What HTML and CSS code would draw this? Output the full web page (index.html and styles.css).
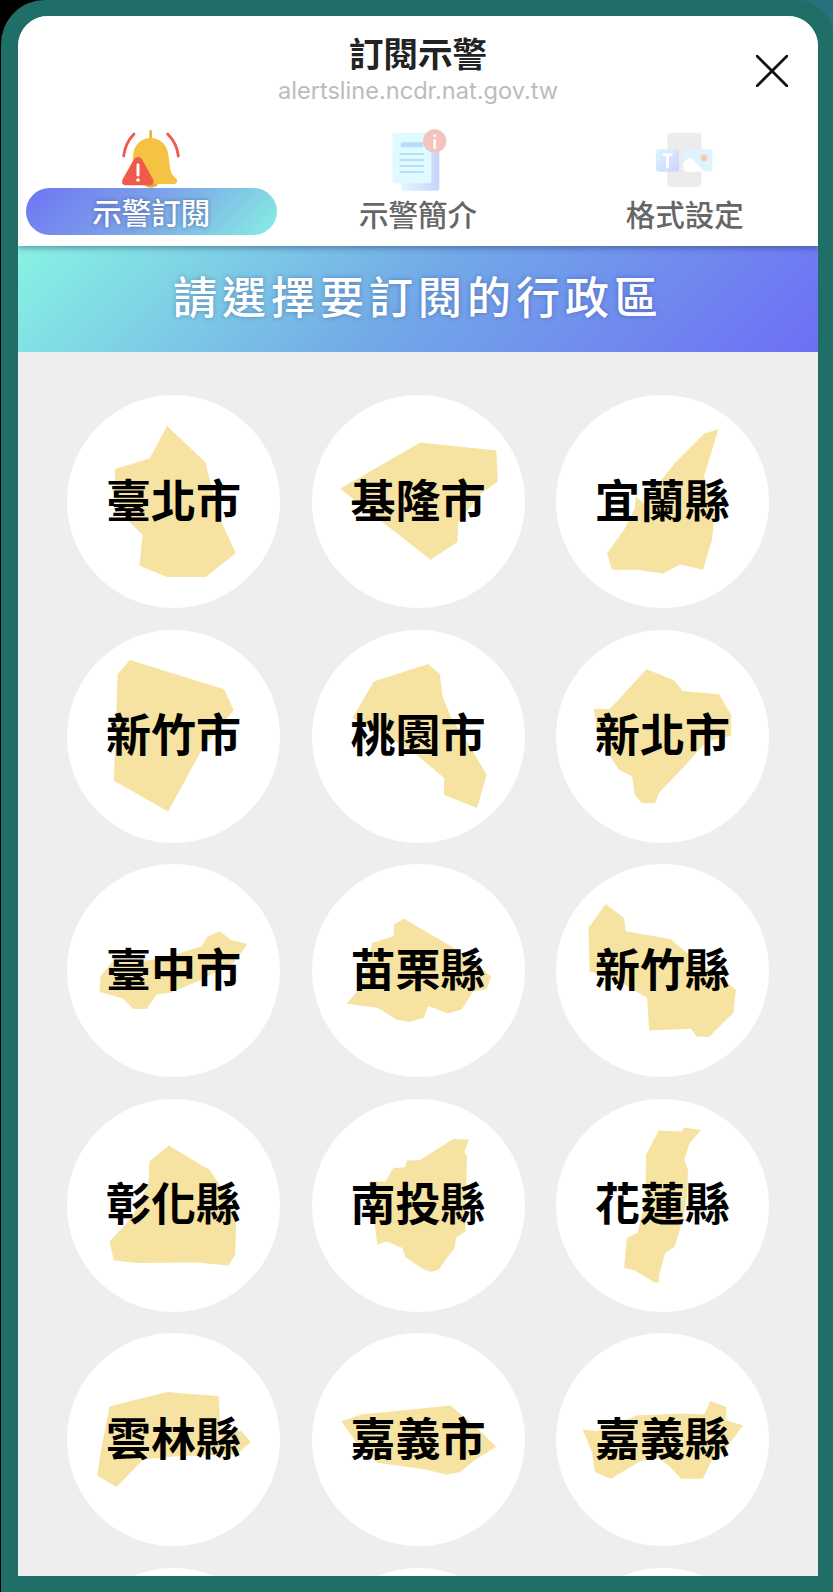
FILE: index.html
```html
<!DOCTYPE html>
<html lang="zh-Hant">
<head>
<meta charset="utf-8">
<title>訂閱示警</title>
<link rel="stylesheet" href="styles.css">
</head>
<body>
<div class="frame">
  <main class="panel">
    <header class="head">
      <div class="titlebar">
        <div class="title">訂閱示警</div>
        <div class="url">alertsline.ncdr.nat.gov.tw</div>
        <svg class="close" viewBox="0 0 32 32"><path d="M1 1L31 31M31 1L1 31"/></svg>
      </div>
      <nav class="tabs">
        <div class="tab active">
          <svg class="tabicon" viewBox="64 24 180 180">
            <path class="arc" d="M103 42Q76 70 72 108M204 42Q232 70 236 108"/>
            <path class="knob" d="M153 34V60"/>
            <path class="bell-clap" d="M132 190H175Q172 203 153 203Q136 203 132 190Z"/>
            <path class="bell" d="M153 54C122 54 101 78 100 110L98 160L76 192H224Q234 192 232 178Q216 166 212 150L207 110C205 78 184 54 153 54Z"/>
            <path class="warn" d="M115 111Q122 111 127 118L160 178Q166 196 150 196H80Q62 196 69 178L103 118Q108 111 115 111Z"/>
            <path class="warn-mark" d="M115 134V165"/>
            <circle class="warn-dot" cx="115" cy="180" r="5.5"/>
          </svg>
          <div class="label">示警訂閱</div>
        </div>
        <div class="tab">
          <svg class="tabicon" viewBox="54 24 180 180">
            <defs>
              <linearGradient id="docback" x1="0" y1="0" x2="1" y2="0"><stop offset="0" stop-color="#e2f7ff"/><stop offset="1" stop-color="#c9d3fb"/></linearGradient>
              <linearGradient id="tbox" x1="0" y1="0" x2="1" y2="1"><stop offset="0" stop-color="#d9f6ff"/><stop offset="1" stop-color="#cfd2fb"/></linearGradient>
            </defs>
            <rect class="doc-back" x="93" y="60" width="115" height="152" rx="8"/>
            <rect class="doc-front" x="67" y="38" width="117" height="152" rx="8"/>
            <rect class="doc-line" x="92" y="67" width="68" height="15" rx="4"/>
            <rect class="doc-line" x="88" y="99" width="74" height="6" rx="3"/>
            <rect class="doc-line" x="88" y="117" width="74" height="6" rx="3"/>
            <rect class="doc-line" x="88" y="135" width="74" height="6" rx="3"/>
            <rect class="doc-line" x="88" y="153" width="74" height="6" rx="3"/>
            <circle class="info" cx="194" cy="63" r="35"/>
            <circle class="info-mark" cx="194" cy="47" r="4"/>
            <rect class="info-mark" x="190" y="57" width="8" height="29" rx="3"/>
          </svg>
          <div class="label">示警簡介</div>
        </div>
        <div class="tab">
          <svg class="tabicon" viewBox="45 24 180 180">
            <rect class="phone" x="82" y="38" width="102" height="163" rx="11"/>
            <rect class="tbox" x="48" y="88" width="69" height="67" rx="9"/>
            <path class="tmark" d="M68 100H98V108H87V145H78V108H68Z"/>
            <rect class="picbox" x="130" y="88" width="87" height="67" rx="10"/>
            <path class="mount" d="M130 130Q143 112 155 115Q170 128 193 155H140Q130 155 130 145Z"/>
            <circle class="sun" cx="192" cy="114" r="10"/>
          </svg>
          <div class="label">格式設定</div>
        </div>
      </nav>
    </header>
    <div class="banner">請選擇要訂閱的行政區</div>
    <section class="grid">
      <div class="city"><svg viewBox="127 45 400 640" preserveAspectRatio="none"><polygon points="315,138 387,247 395,300 415,420 444,520 388,592 315,592 263,558 269,465 240,420 217,350 217,267 282,236"/></svg><span>臺北市</span></div>
      <div class="city"><svg viewBox="587 45 400 640" preserveAspectRatio="none"><polygon points="790,188 933,212 936,305 905,340 862,425 860,487 810,540 730,440 640,327"/></svg><span>基隆市</span></div>
      <div class="city"><svg viewBox="1047 45 400 640" preserveAspectRatio="none"><polygon points="1352,148 1326,160 1270,250 1240,310 1215,375 1197,350 1195,385 1175,450 1143,520 1152,570 1200,570 1248,581 1280,554 1323,570 1340,480 1345,400 1325,290"/></svg><span>宜蘭縣</span></div>
      <div class="city"><svg viewBox="127 750 400 640" preserveAspectRatio="none"><polygon points="245,840 422,928 440,990 380,1110 317,1295 215,1203 222,883"/></svg><span>新竹市</span></div>
      <div class="city"><svg viewBox="587 750 400 640" preserveAspectRatio="none"><polygon points="805,852 827,882 832,950 850,1020 880,1090 915,1185 897,1285 835,1245 835,1195 780,1120 720,1060 663,1015 703,905"/></svg><span>桃園市</span></div>
      <div class="city"><svg viewBox="1047 750 400 640" preserveAspectRatio="none"><polygon points="1217,868 1268,900 1285,933 1353,943 1376,1005 1376,1068 1330,1085 1285,1165 1240,1240 1233,1270 1208,1270 1195,1245 1190,1190 1165,1170 1145,1120 1125,1060 1118,987 1148,987"/></svg><span>新北市</span></div>
      <div class="city"><svg viewBox="127 43 400 640" preserveAspectRatio="none"><polygon points="414,245 436,272 466,283 440,340 380,390 322,430 295,435 277,479 252,479 232,447 188,427 190,380 210,340 300,330 380,290 390,262"/></svg><span>臺中市</span></div>
      <div class="city"><svg viewBox="587 43 400 640" preserveAspectRatio="none"><polygon points="759,207 848,290 900,350 923,380 915,420 890,425 868,480 842,492 805,470 797,505 770,518 745,510 710,475 652,463 680,410 700,280 740,260 741,225"/></svg><span>苗栗縣</span></div>
      <div class="city"><svg viewBox="1047 43 400 640" preserveAspectRatio="none"><polygon points="1140,163 1175,205 1178,245 1262,268 1300,320 1370,400 1385,422 1380,490 1335,562 1312,562 1300,538 1222,543 1218,445 1170,400 1110,365 1108,235"/></svg><span>新竹縣</span></div>
      <div class="city"><svg viewBox="127 747 400 640" preserveAspectRatio="none"><polygon points="318,887 395,960 420,1020 445,1100 443,1215 430,1247 370,1238 260,1240 215,1232 207,1175 250,1100 280,1000 282,935"/></svg><span>彰化縣</span></div>
      <div class="city"><svg viewBox="587 747 400 640" preserveAspectRatio="none"><polygon points="852,867 882,869 873,905 878,920 875,1145 857,1165 855,1195 838,1230 825,1260 810,1267 795,1258 762,1222 757,1195 727,1175 710,1185 705,1130 695,995 725,995 740,954 762,952 765,932 790,930"/></svg><span>南投縣</span></div>
      <div class="city"><svg viewBox="1047 747 400 640" preserveAspectRatio="none"><polygon points="1288,833 1319,840 1298,880 1288,930 1295,960 1293,1040 1285,1110 1270,1190 1252,1210 1240,1280 1241,1298 1232,1298 1195,1262 1175,1255 1180,1165 1200,1150 1215,1050 1216,915 1240,842 1283,845"/></svg><span>花蓮縣</span></div>
      <div class="city"><svg viewBox="127 40 400 640" preserveAspectRatio="none"><polygon points="315,217 412,230 415,330 455,335 472,368 445,405 330,410 270,420 220,503 184,470 190,400 207,260"/></svg><span>雲林縣</span></div>
      <div class="city"><svg viewBox="587 40 400 640" preserveAspectRatio="none"><polygon points="847,258 890,315 933,382 890,425 865,458 840,466 800,450 710,430 680,390 642,305 680,285"/></svg><span>嘉義市</span></div>
      <div class="city"><svg viewBox="1047 40 400 640" preserveAspectRatio="none"><polygon points="1337,244 1367,262 1366,303 1398,317 1365,390 1340,420 1323,478 1282,478 1260,440 1240,415 1205,425 1150,478 1120,458 1115,400 1097,330 1125,335 1200,287 1290,282 1325,285"/></svg><span>嘉義縣</span></div>
      <div class="city"></div>
      <div class="city"></div>
      <div class="city"></div>
    </section>
  </main>
</div>
</body>
</html>
```
FILE: styles.css
```css
* { box-sizing: border-box; }
html, body { margin: 0; height: 100%; overflow: hidden; }
body {
  background: linear-gradient(90deg, #000 50%, #25727c 50%);
  font-family: "Noto Sans CJK TC", "Noto Sans", sans-serif;
}
.frame {
  height: 1592px;
  margin-left: 1px;
  padding: 16px 15px 16px 17px;
  background: #1f6e68;
  border-radius: 44px 36px 0 0;
}
.panel {
  height: 100%;
  overflow: hidden;
  background: #eee;
  border-radius: 30px 30px 0 0;
}
.head {
  position: relative;
  z-index: 1;
  height: 230px;
  background: #fff;
  box-shadow: 0 2px 6px rgba(30, 40, 90, .45);
}
.titlebar {
  position: relative;
  height: 112px;
  padding-top: 14px;
  text-align: center;
}
.title {
  font-size: 34.5px;
  line-height: 44px;
  font-weight: 700;
  color: #222;
}
.url {
  margin-top: 2px;
  font-family: Inter, "Noto Sans", sans-serif;
  font-size: 23.6px;
  line-height: 30px;
  color: #bcbcbc;
}
.close {
  position: absolute;
  right: 30px;
  top: 39px;
  width: 32px;
  height: 32px;
}
.close path { fill: none; stroke: #111; stroke-width: 2.8; stroke-linecap: round; }
.tabs { display: grid; grid-template-columns: repeat(3, 1fr); }
.tab { display: flex; flex-direction: column; align-items: center; padding: 0 8px; }
.tabicon { display: block; width: 60px; height: 60px; overflow: visible; }
.label {
  align-self: stretch;
  height: 47px;
  padding-top: 2px;
  font-size: 29.5px;
  line-height: 47px;
  font-weight: 500;
  color: #666;
  text-align: center;
}
.active .label {
  padding-top: 0;
  line-height: 46px;
  color: #fff;
  border-radius: 24px;
  background: linear-gradient(135deg, #6f74f5 0%, #7da6e8 50%, #86efe3 100%);
  text-shadow: 0 0 4px rgba(40, 50, 110, .55);
}
.arc { fill: none; stroke: #ee5a4c; stroke-width: 8.5; stroke-linecap: round; }
.knob { fill: none; stroke: #eeb13c; stroke-width: 8; stroke-linecap: round; }
.bell { fill: #f6c244; }
.bell-clap { fill: #eda93a; }
.warn { fill: #ef5a4a; }
.warn-mark { fill: none; stroke: #fff; stroke-width: 9; stroke-linecap: round; }
.warn-dot { fill: #fff; }
.doc-back { fill: url(#docback); }
.doc-front { fill: #e0fbff; }
.doc-line { fill: #b9dcfa; }
.info { fill: #f5c3be; }
.info-mark { fill: #fff; }
.phone { fill: #ececec; }
.tbox { fill: url(#tbox); }
.tmark { fill: #fff; }
.picbox { fill: #def3fb; }
.mount { fill: #fff; }
.sun { fill: #f6cbb2; }
.banner {
  height: 106px;
  font-size: 44px;
  line-height: 98px;
  font-weight: 500;
  letter-spacing: 5px;
  text-align: center;
  color: #fff;
  background: linear-gradient(135deg, #88f3e3 0%, #72a8e8 50%, #6e6ef5 100%);
  text-shadow: 0 0 5px rgba(40, 50, 110, .4);
}
.grid {
  display: grid;
  grid-template-columns: repeat(3, 213px);
  grid-auto-rows: 213px;
  column-gap: 31.4px;
  row-gap: 21.6px;
  justify-content: center;
  padding-top: 43px;
}
.city {
  position: relative;
  display: flex;
  align-items: center;
  justify-content: center;
  border-radius: 50%;
  background: #fff;
}
.city svg { position: absolute; inset: 0; width: 100%; height: 100%; }
.city polygon { fill: #f7e3a1; }
.city span {
  position: relative;
  margin-bottom: 7px;
  font-size: 45px;
  line-height: 1;
  font-weight: 700;
  color: #000;
}
```
